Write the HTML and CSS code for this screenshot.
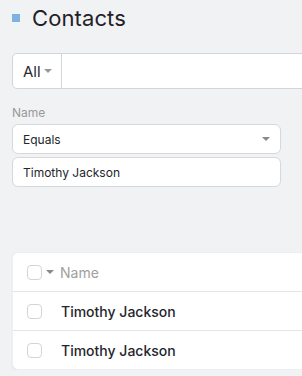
FILE: index.html
```html
<!DOCTYPE html>
<html>
<head>
<meta charset="utf-8">
<link rel="stylesheet" href="styles.css">
</head>
<body>
<div class="page">
  <div class="title-row">
    <span class="title-mark"></span>
    <h1 class="title">Contacts</h1>
  </div>
  <div class="search">
    <div class="search-filter">All <span class="caret"></span></div>
    <div class="search-input"></div>
  </div>
  <div class="field">
    <div class="field-label">Name</div>
    <div class="select">Equals <span class="caret"></span></div>
    <div class="text-input">Timothy Jackson</div>
  </div>
  <div class="table">
    <div class="row head">
      <span class="check"></span><span class="caret caret-head"></span>
      <span class="col-name">Name</span>
    </div>
    <div class="row">
      <span class="check"></span>
      <span class="cell">Timothy Jackson</span>
    </div>
    <div class="row">
      <span class="check"></span>
      <span class="cell">Timothy Jackson</span>
    </div>
  </div>
</div>
</body>
</html>
```
FILE: styles.css
```css
html, body {
  margin: 0;
  padding: 0;
  background: #f1f2f4;
  font-family: Inter, "Noto Sans", sans-serif;
  color: #24262b;
  overflow: hidden;
}
.page {
  padding: 0 0 0 12px;
  width: 330px;
}
.title-row {
  display: flex;
  align-items: center;
  height: 36px;
  gap: 12px;
}
.title-mark {
  width: 8px;
  height: 8px;
  background: #7eb2df;
}
.title {
  margin: 0;
  font-size: 22px;
  font-weight: 400;
  color: #1f2126;
  letter-spacing: 0.1px;
}
.search {
  margin-top: 17px;
  display: flex;
  height: 34px;
  border: 1px solid #d3d5d8;
  border-radius: 5px;
  background: #fff;
}
.search-filter {
  box-sizing: border-box;
  width: 49px;
  border-right: 1px solid #d3d5d8;
  display: flex;
  align-items: center;
  padding-left: 10px;
  font-size: 15px;
  color: #2a2c31;
  gap: 3px;
}
.caret {
  display: inline-block;
  width: 0;
  height: 0;
  border-left: 4px solid transparent;
  border-right: 4px solid transparent;
  border-top: 4px solid #999;
}
.search-input {
  flex: 1;
}
.field {
  margin-top: 17px;
  width: 269px;
}
.field-label {
  font-size: 12px;
  color: #999;
  line-height: 14px;
  margin-bottom: 4px;
}
.select, .text-input {
  height: 28px;
  border: 1px solid #d6d8db;
  border-radius: 6px;
  background: #fff;
  display: flex;
  align-items: center;
  padding: 0 10px;
  font-size: 12px;
  color: #24262b;
}
.select {
  justify-content: space-between;
  margin-bottom: 3px;
}
.select .caret {
  border-top-color: #8a8a8a;
}
.table {
  margin-top: 65px;
  background: #fff;
  border-radius: 6px;
  box-shadow: 0 1px 2px rgba(0,0,0,0.06);
  border: 1px solid #eceef0;
  border-right: none;
}
.row {
  display: flex;
  align-items: center;
  height: 38px;
  border-top: 1px solid #e3e5e8;
  padding-left: 14px;
  font-size: 14px;
  font-weight: 500;
}
.row.head {
  border-top: none;
  height: 38px;
}
.check {
  width: 13px;
  height: 13px;
  border: 1px solid #d2d4d7;
  border-radius: 4px;
  background: #fff;
  flex: none;
}
.caret-head {
  margin-left: 4px;
  border-top-color: #8a8a8a;
}
.col-name {
  margin-left: 6px;
  color: #a0a0a0;
  font-weight: 400;
  font-size: 14px;
}
.cell {
  margin-left: 19px;
  color: #24262b;
}
```
